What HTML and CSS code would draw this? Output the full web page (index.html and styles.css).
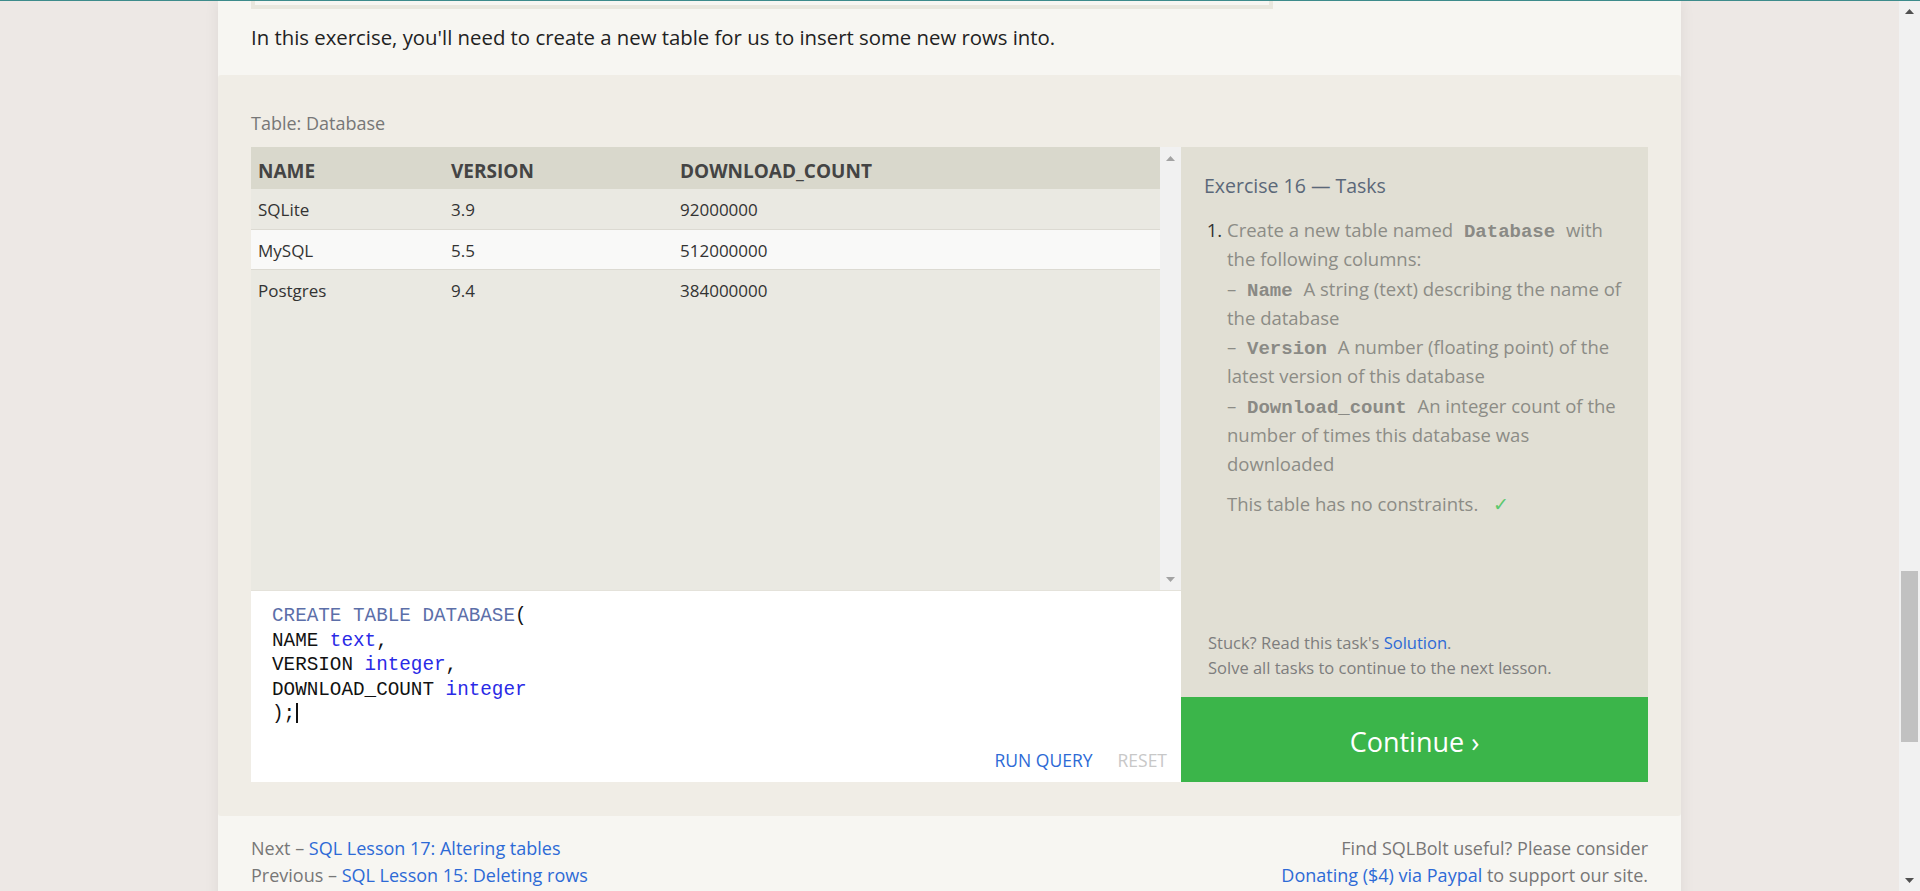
FILE: index.html
```html
<!DOCTYPE html>
<html lang="en">
<head>
<meta charset="utf-8">
<title>SQL Lesson 16: Creating tables</title>
<link rel="stylesheet" href="styles.css">
</head>
<body>
<div class="viewport">
  <div class="page">
    <div class="container">
      <section class="lesson">
        <div class="prev-box"></div>
        <p class="intro">In this exercise, you'll need to create a new table for us to insert some new rows into.</p>
      </section>

      <section class="exercise">
        <div class="table-label">Table: Database</div>
        <div class="workspace">
          <div class="left">
            <div class="results">
              <div class="table-wrap">
                <table class="db-table">
                  <thead>
                    <tr><th class="c1">NAME</th><th class="c2">VERSION</th><th>DOWNLOAD_COUNT</th></tr>
                  </thead>
                  <tbody>
                    <tr><td>SQLite</td><td>3.9</td><td>92000000</td></tr>
                    <tr><td>MySQL</td><td>5.5</td><td>512000000</td></tr>
                    <tr><td>Postgres</td><td>9.4</td><td>384000000</td></tr>
                  </tbody>
                </table>
              </div>
              <div class="vscroll">
                <svg class="arr" width="9" height="5" viewBox="0 0 9 5"><polygon points="0,5 4.5,0 9,5"/></svg>
                <svg class="arr" width="9" height="5" viewBox="0 0 9 5"><polygon points="0,0 9,0 4.5,5"/></svg>
              </div>
            </div>
            <div class="editor">
              <div class="code">
                <div class="line"><span class="kw">CREATE TABLE DATABASE</span>(</div>
                <div class="line">NAME <span class="ty">text</span>,</div>
                <div class="line">VERSION <span class="ty">integer</span>,</div>
                <div class="line">DOWNLOAD_COUNT <span class="ty">integer</span></div>
                <div class="line">);<span class="caret"></span></div>
              </div>
              <div class="actions">
                <span class="run">RUN QUERY</span>
                <span class="reset">RESET</span>
              </div>
            </div>
          </div>

          <div class="tasks">
            <div class="tasks-body">
              <h3 class="tasks-title">Exercise 16 — Tasks</h3>
              <ol class="task-list">
                <li>
                  <span class="row">Create a new table named <code>Database</code> with</span>
                  <span class="row">the following columns:</span>
                  <span class="row">– <code>Name</code> A string (text) describing the name of</span>
                  <span class="row">the database</span>
                  <span class="row">– <code>Version</code> A number (floating point) of the</span>
                  <span class="row">latest version of this database</span>
                  <span class="row">– <code>Download_count</code> An integer count of the</span>
                  <span class="row">number of times this database was</span>
                  <span class="row">downloaded</span>
                  <span class="row constraints">This table has no constraints. <span class="check">✓</span></span>
                </li>
              </ol>
            </div>
            <div class="stuck">
              <div>Stuck? Read this task's <span class="link">Solution</span>.</div>
              <div>Solve all tasks to continue to the next lesson.</div>
            </div>
            <div class="continue">Continue ›</div>
          </div>
        </div>
      </section>

      <footer class="footer">
        <div class="nav">
          <div>Next – <span class="link">SQL Lesson 17: Altering tables</span></div>
          <div>Previous – <span class="link">SQL Lesson 15: Deleting rows</span></div>
        </div>
        <div class="donate">
          <div>Find SQLBolt useful? Please consider</div>
          <div><span class="link">Donating ($4) via Paypal</span> to support our site.</div>
        </div>
      </footer>
    </div>
  </div>

  <div class="scrollbar">
    <div class="sb-btn">
      <svg width="9" height="5" viewBox="0 0 9 5"><polygon points="0,5 4.5,0 9,5"/></svg>
    </div>
    <div class="sb-track"><div class="sb-thumb"></div></div>
    <div class="sb-btn">
      <svg width="9" height="5" viewBox="0 0 9 5"><polygon points="0,0 9,0 4.5,5"/></svg>
    </div>
  </div>
</div>
</body>
</html>
```

FILE: styles.css
```css
* { box-sizing: border-box; }

html, body {
  margin: 0;
  padding: 0;
}

body {
  height: 891px;
  overflow: hidden;
  background: #ede8e5;
  border-top: 1px solid #3d8b8b;
  font-family: "Open Sans", "Noto Sans", sans-serif;
}

.viewport {
  display: flex;
  height: 890px;
}

.page {
  flex: 1;
  overflow: hidden;
}

.container {
  width: 1463px;
  margin: 0 auto;
  background: #f7f6f2;
  box-shadow: 0 0 14px rgba(0, 0, 0, 0.07);
}

/* lesson text */
.lesson {
  padding: 0 33px 23px;
}

.prev-box {
  width: 1022px;
  height: 8px;
  border: 4px solid #e9e7de;
  border-top: none;
}

.intro {
  margin: 13px 0 0;
  font-size: 20.35px;
  line-height: 30px;
  color: #222;
}

/* exercise */
.exercise {
  background: #f0ede6;
  padding: 36px 33px 34px;
  border-radius: 3px;
}

.table-label {
  font-size: 18px;
  line-height: 24px;
  color: #777;
  margin-bottom: 12px;
}

.workspace {
  display: flex;
  height: 635px;
}

.left {
  width: 930px;
  display: flex;
  flex-direction: column;
}

.results {
  height: 443px;
  display: flex;
  background: #eae9e2;
}

.table-wrap {
  flex: 1;
}

.db-table {
  width: 100%;
  border-collapse: separate;
  border-spacing: 0;
}

.db-table th {
  height: 42px;
  padding: 5px 7px 0;
  background: #d9d8cc;
  text-align: left;
  font-size: 19px;
  font-weight: 700;
  color: #444;
}

.db-table th.c1 { width: 193px; }
.db-table th.c2 { width: 229px; }

.db-table td {
  height: 40px;
  padding: 1px 7px 0;
  font-size: 17px;
  color: #333;
}

.db-table tbody tr:nth-child(2) td {
  background: #f9f9f8;
}

.db-table tbody tr + tr td {
  border-top: 1px solid #dcdad2;
}

.vscroll {
  width: 21px;
  background: #f1f1f1;
  display: flex;
  flex-direction: column;
  justify-content: space-between;
  align-items: center;
  padding: 9px 0 8px;
}

.vscroll .arr {
  fill: #a3a3a3;
  display: block;
}

.editor {
  flex: 1;
  background: #fff;
  border-top: 1px solid #e4e2da;
  display: flex;
  flex-direction: column;
  justify-content: space-between;
  padding: 13px 14px 10px 21px;
}

.code {
  font-family: "Liberation Mono", "DejaVu Sans Mono", monospace;
  font-size: 19.3px;
  line-height: 24.5px;
  color: #111;
}

.code .line {
  height: 24.5px;
  white-space: pre;
}

.code .kw { color: #5c6fa9; }
.code .ty { color: #2a2ae6; }

.caret {
  display: inline-block;
  width: 0;
  height: 20px;
  border-left: 2px solid #111;
  vertical-align: -4px;
  margin-left: 1px;
}

.actions {
  display: flex;
  justify-content: flex-end;
  gap: 25px;
  font-size: 17.5px;
  line-height: 24px;
}

.run { color: #2d6ad6; }
.reset { color: #c8c8c8; }

/* tasks panel */
.tasks {
  width: 467px;
  background: #e1dfd4;
  display: flex;
  flex-direction: column;
}

.tasks-body {
  padding: 25px 23px 0;
}

.tasks-title {
  margin: 0;
  font-weight: 400;
  font-size: 19.5px;
  line-height: 28px;
  color: #5b6879;
}

.task-list {
  margin: 15px 0 0;
  padding-left: 23px;
  font-size: 18.5px;
  line-height: 29.3px;
  color: #8c8c86;
}

.task-list li::marker {
  color: #333;
}

.task-list .row {
  display: block;
  white-space: nowrap;
}

.task-list code {
  font-family: "Liberation Mono", "DejaVu Sans Mono", monospace;
  font-weight: 700;
  font-size: 19px;
  line-height: 18px;
  color: #8a8a85;
  padding: 0 6px;
}

.task-list .constraints {
  margin-top: 10px;
}

.check {
  color: #5cc86e;
  margin-left: 10px;
}

.stuck {
  margin-top: auto;
  margin-bottom: 17px;
  padding: 0 23px 0 27px;
  font-size: 16.5px;
  line-height: 25px;
  color: #7d7d7d;
}

.link { color: #2d6ad6; }

.continue {
  height: 85px;
  background: #3bb54a;
  color: #fff;
  font-size: 27px;
  display: flex;
  align-items: center;
  justify-content: center;
  padding-top: 4px;
}

/* footer */
.footer {
  display: flex;
  justify-content: space-between;
  padding: 19px 33px 30px;
  font-size: 18px;
  line-height: 27px;
  color: #777;
}

.donate {
  text-align: right;
}

/* window scrollbar */
.scrollbar {
  width: 21px;
  background: #f1f1f1;
  display: flex;
  flex-direction: column;
}

.sb-btn {
  height: 21px;
  display: flex;
  align-items: center;
  justify-content: center;
  fill: #505050;
}

.sb-btn svg { display: block; }

.sb-track {
  flex: 1;
  padding: 0 2px;
}

.sb-thumb {
  margin-top: 549px;
  height: 171px;
  background: #c1c1c1;
}
```
